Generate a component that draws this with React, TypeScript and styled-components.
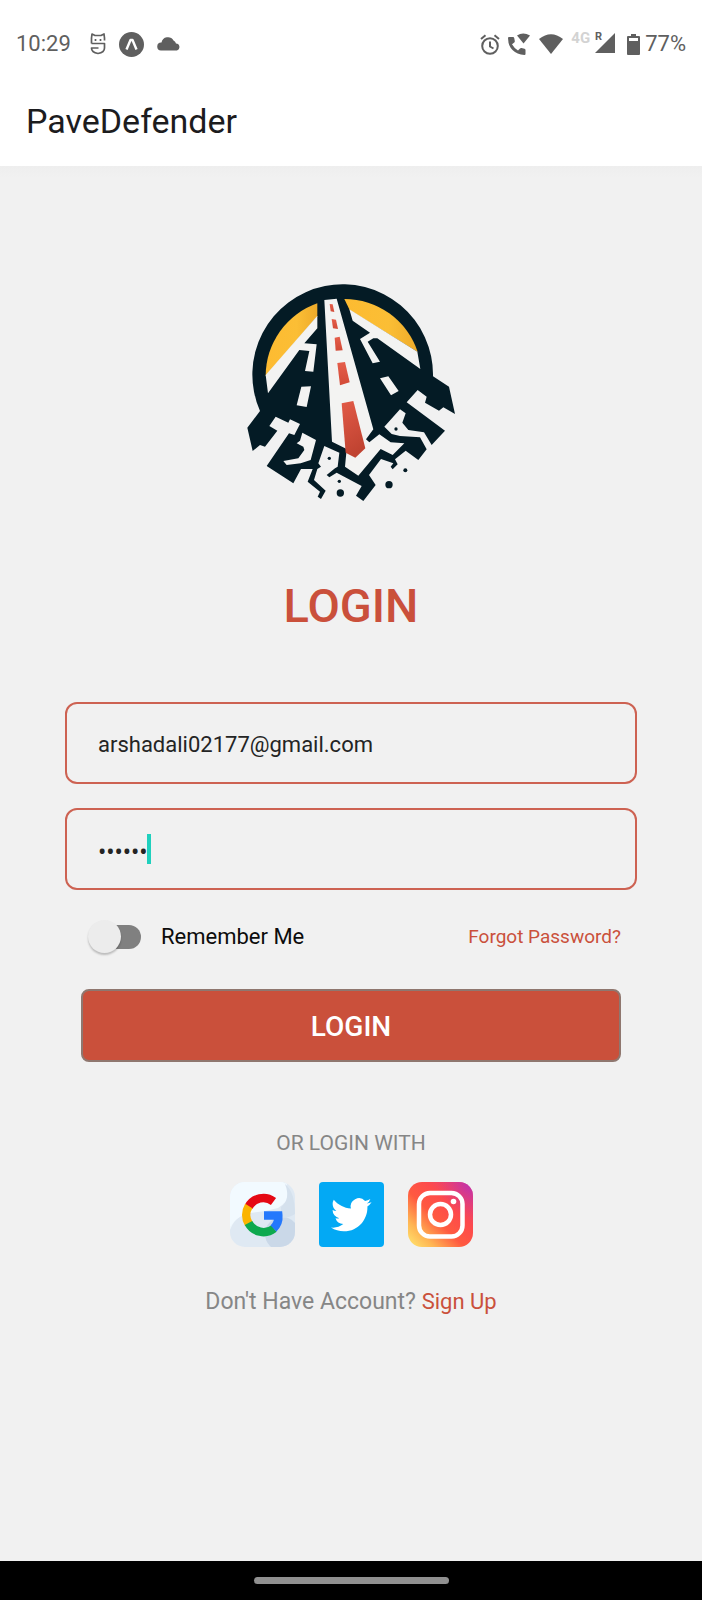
import React from "react";
import styled, { createGlobalStyle } from "styled-components";

const GlobalStyle = createGlobalStyle`
  *, *::before, *::after { box-sizing: border-box; }
  body { margin: 0; background: #f1f1f1; }
  body, button, input { font-family: Roboto, "Noto Sans", sans-serif; }
`;

const accent = "#ca503b";
const ink = "#5f5f5f";

const Screen = styled.div`
  display: flex;
  flex-direction: column;
  min-height: 100vh;
`;

const StatusBar = styled.div`
  display: flex;
  align-items: center;
  justify-content: space-between;
  height: 88px;
  padding: 0 16px;
  background: #fff;
  color: ${ink};
  font-size: 22px;
  line-height: 28px;
`;

const StatusGroup = styled.div<{ $gap: number }>`
  display: flex;
  align-items: center;
  gap: ${(p) => p.$gap}px;
`;

const Clock = styled.time`
  margin-right: 6px;
`;

const Network = styled.div`
  display: flex;
  align-items: flex-start;
  gap: 4px;
  height: 30px;
`;

const NetworkType = styled.span`
  color: #d3d3d3;
  font-size: 15px;
  font-weight: 700;
  line-height: 18px;
`;

const Battery = styled.div`
  display: flex;
  align-items: center;
  gap: 5px;
  margin-left: 4px;
`;

const AppHeader = styled.header`
  display: flex;
  align-items: center;
  height: 78px;
  padding: 0 26px 12px;
  background: #fff;
`;

const AppName = styled.h1`
  margin: 0;
  color: #1c1c1e;
  font-size: 34px;
  font-weight: 400;
  line-height: 40px;
`;

const Main = styled.main`
  display: flex;
  flex: 1;
  flex-direction: column;
  align-items: center;
  padding: 104px 65px 40px;
  background: linear-gradient(#eeeeee, #f1f1f1 12px);
`;

const Title = styled.h2`
  margin: 64px 0;
  color: ${accent};
  font-size: 47px;
  font-weight: 500;
  line-height: 64px;
`;

const Form = styled.form`
  display: flex;
  flex-direction: column;
  gap: 24px;
  width: 100%;
`;

const Field = styled.div`
  position: relative;
`;

const TextInput = styled.input`
  display: block;
  width: 100%;
  height: 82px;
  padding: 2px 31px 0;
  border: 2px solid #cd6252;
  border-radius: 12px;
  outline: 0;
  background: transparent;
  color: #242424;
  font-size: 22px;
  caret-color: transparent;

  &[type="password"] { font-family: "Noto Sans", sans-serif; }
`;

const Caret = styled.span`
  position: absolute;
  top: 26px;
  left: 82px;
  width: 4px;
  height: 30px;
  background: #1fd0bd;
`;

const Actions = styled.div`
  display: flex;
  flex-direction: column;
  gap: 30px;
  padding: 0 16px;
`;

const Options = styled.div`
  display: flex;
  align-items: center;
  justify-content: space-between;
  height: 45px;
  padding-left: 7px;
`;

const Remember = styled.label`
  display: flex;
  align-items: center;
  gap: 20px;
  color: #0c0c0c;
  font-size: 22px;
  line-height: 28px;
`;

const Switch = styled.input`
  display: flex;
  align-items: center;
  appearance: none;
  width: 53px;
  height: 34px;
  margin: 0;

  &::before {
    content: "";
    flex: none;
    z-index: 1;
    width: 33px;
    height: 33px;
    border-radius: 50%;
    background: #ececec;
    box-shadow: 0 2px 2px #00000038;
  }
  &::after {
    content: "";
    flex: none;
    width: 36px;
    height: 24px;
    margin-left: -16px;
    border-radius: 12px;
    background: #808080;
  }
`;

const Link = styled.a<{ $size: number }>`
  color: ${accent};
  font-size: ${(p) => p.$size}px;
  text-decoration: none;
`;

const Submit = styled.button`
  height: 73px;
  padding: 2px 0 0;
  border: 2px solid #8f776f;
  border-radius: 8px;
  background: ${accent};
  color: #fff;
  font-size: 28px;
  font-weight: 500;
`;

const Divider = styled.p`
  margin: 66px 0 24px;
  color: #868686;
  font-size: 21px;
  line-height: 30px;
`;

const Socials = styled.div`
  display: flex;
  gap: 24px;
`;

const SocialButton = styled.button`
  display: block;
  width: 65px;
  height: 65px;
  padding: 0;
  border: 0;
  background: none;

  svg { display: block; }
`;

const SignUp = styled.p`
  margin: 41px 0 0;
  color: #868686;
  font-size: 23px;
  line-height: 28px;
`;

const GestureBar = styled.footer`
  display: flex;
  align-items: center;
  justify-content: center;
  height: 39px;
  background: #000;
`;

const GestureHandle = styled.div`
  width: 195px;
  height: 7px;
  border-radius: 4px;
  background: #909090;
`;

const FaceIcon = () => (
  <svg width="16" height="22" viewBox="0 0 16 22" fill="none" stroke={ink} strokeWidth="1.7" strokeLinejoin="round">
    <path d="M1.500 10.500V5L2 1l3 1.500h6L14 1l.5 4v2.500M1.500 10.500h13V15q0 4.500-6.500 5.500-6.500-1-6.500-5.500h7" />
    <path d="M5.500 6v2M10.500 6v2" />
  </svg>
);

const ExpoIcon = () => (
  <svg width="25" height="25" viewBox="0 0 25 25">
    <circle cx="12.500" cy="12.500" r="12.500" fill={ink} />
    <path d="M7.500 17.500 11.500 8h2l4 9.500" fill="none" stroke="#fff" strokeWidth="2.400" strokeLinejoin="round" />
  </svg>
);

const CloudIcon = () => (
  <svg width="24" height="14" viewBox="0 0 24 14" fill={ink}>
    <path d="M4 13.500A4 4 0 0 1 4.500 5.500 6.500 6.500 0 0 1 16.500 3.500q2 1 2.500 3A3.600 3.600 0 0 1 20 13.500z" />
  </svg>
);

const AlarmIcon = () => (
  <svg width="20" height="21" viewBox="0 0 20 21" fill="none" stroke={ink} strokeWidth="2">
    <circle cx="10" cy="12" r="7.800" />
    <path d="M10 7.500v5l3.500 2M1 5l4.500-3.800M19 5l-4.500-3.800" />
  </svg>
);

const CallIcon = () => (
  <svg width="24" height="24" viewBox="0 0 24 24" fill={ink}>
    <path d="M2 5h4q1 0 1.200 1l.6 3q.2.800-.5 1.400L5 12.300q2.400 4.200 6 6.300l2-2.100q.7-.7 1.500-.5l3 .7q1 .3 1 1.300v4q0 1-1 1Q10 22.500 5.500 18T1 6q0-1 1-1z" />
    <path d="M10 3.500q6-4 13 0L16.500 11.500z" />
  </svg>
);

const WifiIcon = () => (
  <svg width="26" height="21" viewBox="0 0 26 21" fill={ink}>
    <path d="M1 5q12-9.500 24 0L13 20z" />
  </svg>
);

const SignalIcon = () => (
  <svg width="22" height="30" viewBox="0 -3 22 30" fill={ink}>
    <path d="M21 1v20H1z" />
    <text x="1" y="8" fontSize="11" fontWeight="700">R</text>
  </svg>
);

const BatteryIcon = () => (
  <svg width="13" height="21" viewBox="0 0 13 21" fill={ink}>
    <path d="M4 0h5v2h3q1 0 1 1v17q0 1-1 1H1q-1 0-1-1V3q0-1 1-1h3zM2 4v3h9V4z" fillRule="evenodd" />
  </svg>
);

const dark = "#041b25";
const paper = "#f3f3f2";

const Logo = () => (
  <svg width="240" height="240" viewBox="3 0 720 720" role="img" aria-label="PaveDefender logo">
    <defs>
      <linearGradient id="sun" x1="0" x2="1">
        <stop offset="0" stopColor="#fdbb31" />
        <stop offset="0.600" stopColor="#fbbe35" />
        <stop offset="1" stopColor="#eeab2a" />
      </linearGradient>
      <linearGradient id="lane" x1="0" x2="0" y1="0" y2="1">
        <stop offset="0" stopColor="#e55e4b" />
        <stop offset="1" stopColor="#d24a37" />
      </linearGradient>
      <linearGradient id="laneEnd" x1="0" x2="0.300" y1="0" y2="1">
        <stop offset="0" stopColor="#e25a47" />
        <stop offset="1" stopColor="#c04331" />
      </linearGradient>
    </defs>
    <path
      fill={dark}
      d="M90 423A271 271 0 1 1 609 319L657 350 675 432 640 412 627 422 585 398 590 380 563 360 530 397 645 482 605 525 582 487 535 480 517 458 527 430 510 418 463 470 485 492 510 498 570 502 590 538 565 570 527 542 495 568 503 583 488 598 482 590 490 580 453 567 417 615 437 645 400 693 378 677 395 648 320 608 298 622 290 615 315 595 323 590 328 548 283 528 265 580 273 590 262 597 252 630 287 662 273 687 263 680 270 665 233 635 248 597 213 597 190 640 110 588 177 490 193 495 210 462 180 448 175 458 137 440 118 468 142 482 105 530 90 525 68 543 52 473Z"
    />
    <path fill="url(#sun)" d="M262 100A231 231 0 0 0 107 318L262 139Z" />
    <path fill={paper} d="M262 137 107 315 114 370 208 240 238 243 225 303 250 305 260 223 223 220 262 175Z" />
    <path fill="url(#sun)" d="M343 87A231 231 0 0 1 563 246L359 120Z" />
    <path fill={paper} d="M358 118 562 245 571 297 442 205 430 205 413 215 450 275 428 280 390 207 420 188 368 152Z" />
    <path
      fill={paper}
      d="M283 90 320 86 430 478 408 508 418 517 448 493 482 517 523 520 488 555 452 537 385 617 345 590 350 537 306 515Z"
    />
    <path fill={paper} d="M217 488 258 510 242 570 212 580 170 585 160 573 205 565 223 540 220 530 200 520 210 512Z" />
    <path fill={paper} d="M214 350 243 349 230 411 200 406ZM450 325 475 319 506 363 483 376Z" />
    <g fill="url(#lane)">
      <path d="M299 102 308 103 313 126 302 124Z" />
      <path d="M305 147 318 149 324 177 309 175Z" />
      <path d="M314 203 329 200 338 241 317 242Z" />
      <path d="M322 279 345 276 359 337 330 346Z" />
    </g>
    <path fill="url(#laneEnd)" d="M335 400 370 393 406 535 376 563 347 548Z" />
    <g fill={dark}>
      <circle cx="498" cy="477" r="5" />
      <circle cx="298" cy="565" r="5" />
      <circle cx="328" cy="634" r="5" />
      <circle cx="331" cy="669" r="11" />
      <circle cx="477" cy="644" r="11" />
      <circle cx="526" cy="601" r="6" />
    </g>
  </svg>
);

const GoogleIcon = () => (
  <svg width="65" height="65" viewBox="0 0 65 65">
    <defs>
      <clipPath id="googleTile"><rect width="65" height="65" rx="15" /></clipPath>
    </defs>
    <g clipPath="url(#googleTile)">
      <rect width="65" height="65" fill="#dfe9f3" />
      <path fill="#eef6fc" d="M0 0h57v20Q30 26 14 32 4 37 0 48z" />
      <path fill="#f2faff" d="M0 0h53q6 5 5 12-1 9-10 14-14 4-30 5Q6 35 0 45z" />
      <circle cx="52" cy="52" r="17" fill="#cad8e8" />
      <path fill="#d5e1ed" d="M55 2q10 8 10 30-6 4-14 4V25q10-8 4-23z" />
    </g>
    <g fill="none" strokeWidth="8.500">
      <path stroke="#e50914" d="M18.500 25A16.800 16.800 0 0 1 43.500 19.500" />
      <path stroke="#fbb400" d="M18.800 24A17 17 0 0 0 18.800 42" />
      <path stroke="#0da94e" d="M18.500 41A17 17 0 0 0 44 46.500" />
      <path stroke="#2478fc" d="M34 33.500H48.300A16 16 0 0 1 43.500 46.500" />
    </g>
  </svg>
);

const TwitterIcon = () => (
  <svg width="65" height="65" viewBox="0 0 65 65">
    <rect width="65" height="65" rx="4" fill="#03a9f4" />
    <path fill="#fff" transform="translate(12 12.500) scale(1.690)" d="M23.950 4.570a10 10 0 0 1-2.820.770 4.960 4.960 0 0 0 2.160-2.720c-.950.550-2 .960-3.130 1.180a4.920 4.920 0 0 0-8.380 4.480C7.690 8.100 4.070 6.130 1.640 3.160a4.820 4.820 0 0 0-.670 2.480c0 1.710.870 3.210 2.190 4.100a4.900 4.900 0 0 1-2.230-.620v.060a4.920 4.920 0 0 0 3.950 4.830 5 5 0 0 1-2.210.080 4.940 4.940 0 0 0 4.600 3.420A9.870 9.870 0 0 1 0 19.540a13.990 13.990 0 0 0 7.550 2.210c9.050 0 14-7.500 14-13.980 0-.210 0-.420-.020-.630A9.940 9.940 0 0 0 24 4.590z" />
  </svg>
);

const InstagramIcon = () => (
  <svg width="65" height="65" viewBox="0 0 65 65">
    <defs>
      <linearGradient id="igWarm" x1="0.050" y1="0.950" x2="0.900" y2="0.100">
        <stop offset="0" stopColor="#ffdc69" />
        <stop offset="0.180" stopColor="#ffb553" />
        <stop offset="0.450" stopColor="#ff5a40" />
        <stop offset="0.700" stopColor="#fd4a4c" />
        <stop offset="1" stopColor="#e03c80" />
      </linearGradient>
      <radialGradient id="igCool" cx="1" cy="0" r="0.550">
        <stop offset="0" stopColor="#b72fba" />
        <stop offset="1" stopColor="#e83d70" stopOpacity="0" />
      </radialGradient>
    </defs>
    <rect width="65" height="65" rx="14" fill="url(#igWarm)" />
    <rect width="65" height="65" rx="14" fill="url(#igCool)" />
    <g fill="none" stroke="#fff" strokeWidth="4.500">
      <rect x="11" y="11" width="43.500" height="43.500" rx="11" />
      <circle cx="32.500" cy="32.500" r="10.500" />
    </g>
    <circle cx="45.500" cy="19.500" r="2.800" fill="#fff" />
  </svg>
);

export default function App() {
  return (
    <Screen>
      <GlobalStyle />
      <StatusBar>
        <StatusGroup $gap={13}>
          <Clock>10:29</Clock>
          <FaceIcon />
          <ExpoIcon />
          <CloudIcon />
        </StatusGroup>
        <StatusGroup $gap={7}>
          <AlarmIcon />
          <CallIcon />
          <WifiIcon />
          <Network>
            <NetworkType>4G</NetworkType>
            <SignalIcon />
          </Network>
          <Battery>
            <BatteryIcon />
            <span>77%</span>
          </Battery>
        </StatusGroup>
      </StatusBar>
      <AppHeader>
        <AppName>PaveDefender</AppName>
      </AppHeader>
      <Main>
        <Logo />
        <Title>LOGIN</Title>
        <Form onSubmit={(event) => event.preventDefault()}>
          <Field>
            <TextInput type="email" aria-label="Email" defaultValue="arshadali02177@gmail.com" />
          </Field>
          <Field>
            <TextInput type="password" aria-label="Password" defaultValue="secret" />
            <Caret />
          </Field>
          <Actions>
            <Options>
              <Remember>
                <Switch type="checkbox" role="switch" />
                Remember Me
              </Remember>
              <Link href="#forgot" $size={19}>Forgot Password?</Link>
            </Options>
            <Submit type="submit">LOGIN</Submit>
          </Actions>
        </Form>
        <Divider>OR LOGIN WITH</Divider>
        <Socials>
          <SocialButton type="button" aria-label="Google"><GoogleIcon /></SocialButton>
          <SocialButton type="button" aria-label="Twitter"><TwitterIcon /></SocialButton>
          <SocialButton type="button" aria-label="Instagram"><InstagramIcon /></SocialButton>
        </Socials>
        <SignUp>
          Don't Have Account? <Link href="#signup" $size={22}>Sign Up</Link>
        </SignUp>
      </Main>
      <GestureBar>
        <GestureHandle />
      </GestureBar>
    </Screen>
  );
}
